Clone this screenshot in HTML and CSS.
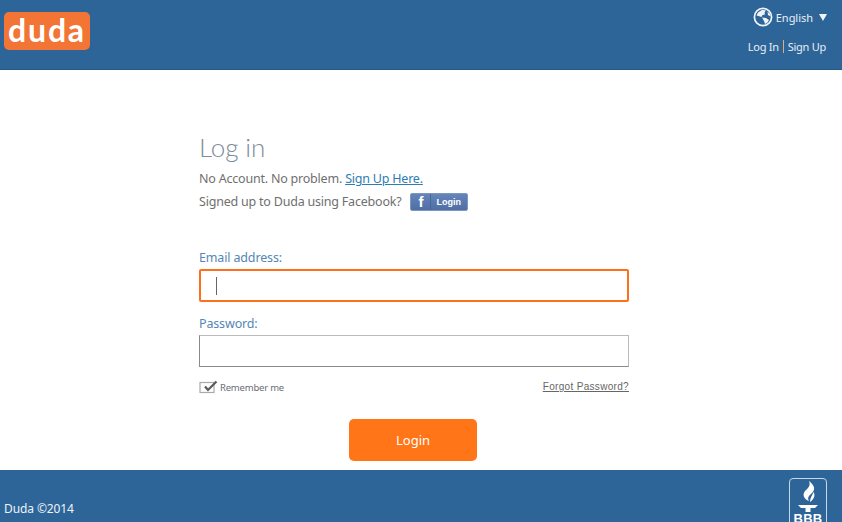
FILE: index.html
```html
<!DOCTYPE html>
<html lang="en">
<head>
<meta charset="utf-8">
<title>Duda - Log in</title>
<link rel="stylesheet" href="styles.css">
</head>
<body>
<div class="page">
  <header class="header">
    <a class="logo">duda</a>
    <div class="header-right">
      <div class="lang">
        <svg class="globe" width="20" height="20" viewBox="0 0 20 20"><circle cx="10" cy="10" r="8.6" fill="none" stroke="#eef3f8" stroke-width="1.7"/><path d="M5 5.5 L9 3 L13 3.2 L11.5 5.5 L12 7.5 L9.5 8 L8.5 10 L5.5 9 L3.5 8.5Z" fill="#eef3f8"/><path d="M9 10.5 L13 11 L16 13 L14.5 15.5 L12 17 L11 14 Z" fill="#eef3f8"/><path d="M14.5 4.5 L17 7 L17.5 9.5 L15 8 Z" fill="#eef3f8"/></svg>
        <span class="lang-name">English</span>
        <span class="caret"></span>
      </div>
      <nav class="auth"><a>Log In</a><span class="sep"></span><a>Sign Up</a></nav>
    </div>
  </header>
  <main class="main">
    <form class="form">
      <h1 class="title">Log in</h1>
      <p class="line">No Account. No problem. <a class="link">Sign Up Here.</a></p>
      <p class="line fb-line">Signed up to Duda using Facebook?
        <a class="fb"><span class="fb-f">f</span><span class="fb-text">Login</span></a>
      </p>
      <label class="label label-email">Email address:</label>
      <div class="input input-focus"><span class="cursor"></span></div>
      <label class="label label-pass">Password:</label>
      <div class="input"></div>
      <div class="options">
        <span class="remember">
          <svg width="19" height="14" viewBox="0 0 19 14"><rect x="1" y="2.5" width="14" height="10" fill="#fdfdfd" stroke="#aaa" stroke-width="1.2"/><path d="M6 6.5 L9 10 L17.5 1.5" fill="none" stroke="#5a5a5a" stroke-width="2.2"/></svg>
          <span>Remember me</span>
        </span>
        <a class="forgot">Forgot Password?</a>
      </div>
      <div class="actions"><button type="button" class="login">Login</button></div>
    </form>
  </main>
  <footer class="footer">
    <span class="copy">Duda ©2014</span>
    <div class="bbb">
      <svg width="24" height="32" viewBox="0 0 24 32"><path d="M13 0 C18 4 20 8 16 12 C13 15 11 16 13 20 C8 18 6 14 9 10 C12 7 15 5 13 0Z" fill="#fff"/><path d="M17.5 11 C20 15 17 19 14 21 C14 17 16 15 17.5 11Z" fill="#fff"/><path d="M2 24 H22 L19 27 H5Z" fill="#fff"/><path d="M9.5 27 H14.5 V31 H9.5Z" fill="#fff"/></svg>
      <span class="bbb-text">BBB</span>
    </div>
  </footer>
</div>
</body>
</html>
```
FILE: styles.css
```css
* { box-sizing: border-box; }
html, body { margin: 0; padding: 0; height: 100%; overflow: hidden; }
body { font-family: "Noto Sans", "Open Sans", sans-serif; background: #fff; }
.page { display: flex; flex-direction: column; height: 522px; }
.header { height: 70px; flex: none; background: #2d6599; display: flex; justify-content: space-between; padding: 12px 15px 0 4px; border-bottom: 1px solid #28587f; }
.logo { width: 86px; height: 38px; background: #f27536; border-radius: 5px; color: #fff; font: 700 32px/35px Lato, sans-serif; letter-spacing: 1.8px; text-align: center; }
.header-right { display: flex; flex-direction: column; align-items: flex-end; }
.lang { display: flex; align-items: center; height: 20px; margin-top: -5px; color: #e9eff5; font-size: 11px; }
.globe { margin-right: 3px; }
.lang-name { margin-right: 6px; letter-spacing: -.03px; }
.caret { width: 0; height: 0; border-left: 4.5px solid transparent; border-right: 4.5px solid transparent; border-top: 7px solid #f2f5f8; margin-right: 0; }
.auth { display: flex; align-items: center; margin-top: 12px; margin-right: 1px; color: #e9eff5; font-size: 11px; line-height: 15px; letter-spacing: -.27px; }
.sep { width: 1px; height: 13px; background: #e9a878; margin: 0 4px; }
.main { flex: 1; padding: 59px 0 0 199px; }
.form { width: 430px; }
.title { margin: 0 0 1px; font: 300 26px/37px Lato, sans-serif; color: #7e8c9a; letter-spacing: -.1px; }
.line { margin: 0; font-size: 12.5px; line-height: 23px; color: #6f6f6f; letter-spacing: -.21px; }
.link { color: #2d7db3; text-decoration: underline; }
.fb-line { display: flex; align-items: center; gap: 9px; }
.fb { width: 58px; height: 18px; border-radius: 2px; background: linear-gradient(#6385b8, #4f6ea5); border: 1px solid #7d97bf; color: #fff; display: flex; align-items: center; font: 700 9px/16px "Liberation Sans", sans-serif; letter-spacing: 0; }
.fb-f { width: 20px; text-align: center; font: 700 15px/16px "Liberation Sans", sans-serif; border-right: 1px solid #48659a; }
.fb-text { margin-left: 5px; }
.label { display: block; font-size: 12.5px; line-height: 18px; color: #5486b4; letter-spacing: -.15px; }
.label-email { margin-top: 36px; }
.label-pass { margin-top: 13px; }
.input { height: 32px; margin-top: 2px; border: 1px solid #8a8a8a; border-top-color: #bbb; border-right-color: #bbb; }
.input-focus { height: 33px; border: 2px solid #ff6f1c; border-radius: 2px; display: flex; align-items: center; padding-left: 15px; }
.cursor { width: 1px; height: 18px; background: #666; }
.options { display: flex; justify-content: space-between; align-items: center; margin-top: 12px; height: 16px; }
.remember { display: flex; align-items: center; gap: 2px; font-size: 9.5px; color: #6c6c78; letter-spacing: -.2px; }
.forgot { font: 10px/12px "Liberation Sans", sans-serif; color: #666; text-decoration: underline; letter-spacing: .32px; }
.actions { display: flex; justify-content: center; margin-top: 24px; padding-right: 2px; }
.login { width: 128px; height: 42px; border: 0; border-radius: 5px; background: #ff7518; color: #fff; font: 400 13px "Noto Sans", sans-serif; }
.footer { height: 52px; flex: none; background: #2d6599; display: flex; justify-content: space-between; padding: 0 15px 0 4px; overflow: hidden; }
.copy { margin-top: 30px; font-size: 12px; line-height: 18px; color: #eef3f8; letter-spacing: -.1px; }
.bbb { width: 38px; height: 60px; margin-top: 8px; border: 1px solid #c7d7e6; border-radius: 4px; display: flex; flex-direction: column; align-items: center; padding-top: 2px; }
.bbb-text { font: 700 13px/12px "Liberation Sans", sans-serif; color: #fff; letter-spacing: .2px; }
```
